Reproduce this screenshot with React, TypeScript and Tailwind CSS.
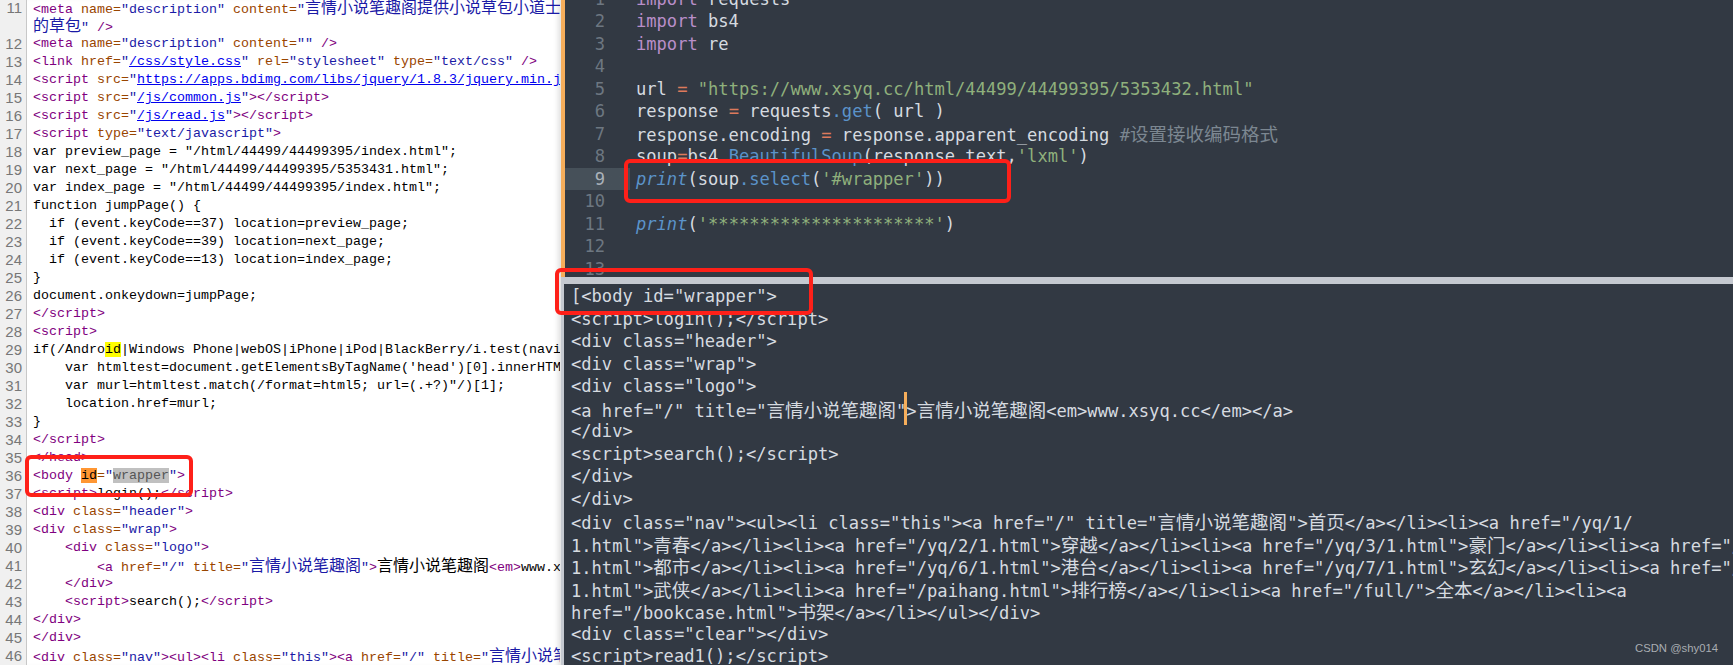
import type { ReactNode } from 'react'

const tag = 'text-[#800080]'
const attr = 'text-[#994500]'
const val = 'text-[#1a1aa6]'
const link = 'text-[#0000ee] underline'

const kw = 'text-[#b98ec9]'
const str = 'text-[#8fb07c]'
const fn = 'text-[#5b93c9]'
const op = 'text-[#dd7a5c]'
const cmt = 'text-[#7c8791]'
const em = 'text-[#5b93c9] italic'

type Tok = string | [string, string]

// wider CJK glyphs so they sit on the same grid as the source screenshot
function Cjk({ text, size }: { text: string; size: string }) {
  const parts = text.split(/([\u4e00-\u9fff]+)/)
  return (
    <>
      {parts.map((p, i) =>
        i % 2 === 1 ? (
          <span key={i} className={size}>
            {p}
          </span>
        ) : (
          p
        ),
      )}
    </>
  )
}

function Toks({ toks, size }: { toks: Tok[]; size: string }) {
  return (
    <>
      {toks.map((t, i) =>
        typeof t === 'string' ? (
          <Cjk key={i} text={t} size={size} />
        ) : (
          <span key={i} className={t[0]}>
            <Cjk text={t[1]} size={size} />
          </span>
        ),
      )}
    </>
  )
}

const cjkLeft = "text-[16px] [font-family:'Noto_Sans_CJK_SC',sans-serif]"
const cjkRight = "text-[18.5px] [font-family:'Noto_Sans_CJK_SC',sans-serif]"

// shorthand for a coloured html tag with attrs
const open = (name: string, a: string, v: string, close = '>'): Tok[] => [
  [tag, `<${name} `],
  [attr, `${a}=`],
  [val, `"${v}"`],
  [tag, close],
]

const sourceRows: { n?: number; toks: Tok[] }[] = [
  {
    n: 11,
    toks: [
      [tag, '<meta '],
      [attr, 'name='],
      [val, '"description" '],
      [attr, 'content='],
      [val, '"言情小说笔趣阁提供小说草包小道士最新章节'],
    ],
  },
  { toks: [[val, '的草包" '], [tag, '/>']] },
  { n: 12, toks: [[tag, '<meta '], [attr, 'name='], [val, '"description" '], [attr, 'content='], [val, '"" '], [tag, '/>']] },
  {
    n: 13,
    toks: [
      [tag, '<link '],
      [attr, 'href='],
      [val, '"'],
      [link, '/css/style.css'],
      [val, '" '],
      [attr, 'rel='],
      [val, '"stylesheet" '],
      [attr, 'type='],
      [val, '"text/css" '],
      [tag, '/>'],
    ],
  },
  {
    n: 14,
    toks: [[tag, '<script '], [attr, 'src='], [val, '"'], [link, 'https://apps.bdimg.com/libs/jquery/1.8.3/jquery.min.js']],
  },
  { n: 15, toks: [[tag, '<script '], [attr, 'src='], [val, '"'], [link, '/js/common.js'], [val, '"'], [tag, '></script>']] },
  { n: 16, toks: [[tag, '<script '], [attr, 'src='], [val, '"'], [link, '/js/read.js'], [val, '"'], [tag, '></script>']] },
  { n: 17, toks: open('script', 'type', 'text/javascript') },
  { n: 18, toks: ['var preview_page = "/html/44499/44499395/index.html";'] },
  { n: 19, toks: ['var next_page = "/html/44499/44499395/5353431.html";'] },
  { n: 20, toks: ['var index_page = "/html/44499/44499395/index.html";'] },
  { n: 21, toks: ['function jumpPage() {'] },
  { n: 22, toks: ['  if (event.keyCode==37) location=preview_page;'] },
  { n: 23, toks: ['  if (event.keyCode==39) location=next_page;'] },
  { n: 24, toks: ['  if (event.keyCode==13) location=index_page;'] },
  { n: 25, toks: ['}'] },
  { n: 26, toks: ['document.onkeydown=jumpPage;'] },
  { n: 27, toks: [[tag, '</script>']] },
  { n: 28, toks: [[tag, '<script>']] },
  {
    n: 29,
    toks: [
      'if(/Andro',
      ['bg-[#ffff00]', 'id'],
      '|Windows Phone|webOS|iPhone|iPod|BlackBerry/i.test(navigator.userAgent)) {',
    ],
  },
  { n: 30, toks: ["    var htmltest=document.getElementsByTagName('head')[0].innerHTML;"] },
  { n: 31, toks: ['    var murl=htmltest.match(/format=html5; url=(.+?)"/)[1];'] },
  { n: 32, toks: ['    location.href=murl;'] },
  { n: 33, toks: ['}'] },
  { n: 34, toks: [[tag, '</script>']] },
  { n: 35, toks: [[tag, '</head>']] },
  {
    n: 36,
    toks: [
      [tag, '<body '],
      [`${attr} bg-[#ff9632] !text-black`, 'id'],
      [attr, '='],
      [val, '"'],
      [`${val} bg-[#c0c0c0] !text-[#555]`, 'wrapper'],
      [val, '"'],
      [tag, '>'],
    ],
  },
  { n: 37, toks: [[tag, '<script>'], 'login();', [tag, '</script>']] },
  { n: 38, toks: open('div', 'class', 'header') },
  { n: 39, toks: open('div', 'class', 'wrap') },
  { n: 40, toks: ['    ', ...open('div', 'class', 'logo')] },
  {
    n: 41,
    toks: [
      '        ',
      [tag, '<a '],
      [attr, 'href='],
      [val, '"/" '],
      [attr, 'title='],
      [val, '"言情小说笔趣阁"'],
      [tag, '>'],
      '言情小说笔趣阁',
      [tag, '<em>'],
      'www.xsyq.cc',
      [tag, '</em></a>'],
    ],
  },
  { n: 42, toks: ['    ', [tag, '</div>']] },
  { n: 43, toks: ['    ', [tag, '<script>'], 'search();', [tag, '</script>']] },
  { n: 44, toks: [[tag, '</div>']] },
  { n: 45, toks: [[tag, '</div>']] },
  {
    n: 46,
    toks: [
      ...open('div', 'class', 'nav'),
      [tag, '<ul>'],
      ...open('li', 'class', 'this'),
      [tag, '<a '],
      [attr, 'href='],
      [val, '"/" '],
      [attr, 'title='],
      [val, '"言情小说笔趣阁"'],
    ],
  },
]

const codeRows: Tok[][] = [
  [[kw, 'import'], ' requests'],
  [[kw, 'import'], ' bs4'],
  [[kw, 'import'], ' re'],
  [],
  ['url ', [op, '='], ' ', [str, '"https://www.xsyq.cc/html/44499/44499395/5353432.html"']],
  ['response ', [op, '='], ' requests', [fn, '.get'], '( url )'],
  ['response.encoding ', [op, '='], ' response.apparent_encoding ', [cmt, '#设置接收编码格式']],
  ['soup', [op, '='], 'bs4', [fn, '.BeautifulSoup'], '(response.text,', [str, "'lxml'"], ')'],
  [[em, 'print'], '(soup', [fn, '.select'], '(', [str, "'#wrapper'"], '))'],
  [],
  [[em, 'print'], '(', [str, "'**********************'"], ')'],
  [],
  [],
]

const outputRows: ReactNode[] = [
  '[<body id="wrapper">',
  '<script>login();</script>',
  '<div class="header">',
  '<div class="wrap">',
  '<div class="logo">',
  <>
    <Cjk text={'<a href="/" title="言情小说笔趣阁"'} size={cjkRight} />
    <span className="relative">
      <span className="absolute left-[-2px] top-[-9px] h-[33px] w-[3px] bg-[#f6ae5b]" />
      {'>'}
    </span>
    <Cjk text="言情小说笔趣阁<em>www.xsyq.cc</em></a>" size={cjkRight} />
  </>,
  '</div>',
  '<script>search();</script>',
  '</div>',
  '</div>',
  <Cjk
    text={'<div class="nav"><ul><li class="this"><a href="/" title="言情小说笔趣阁">首页</a></li><li><a href="/yq/1/'}
    size={cjkRight}
  />,
  <Cjk
    text={'1.html">青春</a></li><li><a href="/yq/2/1.html">穿越</a></li><li><a href="/yq/3/1.html">豪门</a></li><li><a href="/yq/4/'}
    size={cjkRight}
  />,
  <Cjk
    text={'1.html">都市</a></li><li><a href="/yq/6/1.html">港台</a></li><li><a href="/yq/7/1.html">玄幻</a></li><li><a href="/yq/8/'}
    size={cjkRight}
  />,
  <Cjk
    text={'1.html">武侠</a></li><li><a href="/paihang.html">排行榜</a></li><li><a href="/full/">全本</a></li><li><a'}
    size={cjkRight}
  />,
  <Cjk text={'href="/bookcase.html">书架</a></li></ul></div>'} size={cjkRight} />,
  '<div class="clear"></div>',
  '<script>read1();</script>',
]

export default function App() {
  return (
    <div className="relative flex h-[665px] w-[1733px] overflow-hidden bg-white">
      {/* ── page source ─────────────────────────── */}
      <div className="h-full w-[561px] shrink-0 overflow-hidden shadow-[inset_-6px_0_5px_-3px_rgba(0,0,0,0.12)]">
        <div className="relative flex h-full flex-col">
          <div className="absolute inset-y-0 left-0 w-[27px] border-r border-[#c8c8c8] bg-[#f0f0f0]" />
          <div className="relative -mt-[1px] flex flex-col">
            {sourceRows.map((row, i) => (
              <div key={i} className="flex h-[18px] items-center leading-[18px]">
                <span className="w-[22px] shrink-0 text-right font-['Liberation_Sans',sans-serif] text-[15px] text-[#777]">
                  {row.n}
                </span>
                <pre className="ml-[11px] w-[527px] overflow-hidden font-['Liberation_Mono',monospace] text-[13.33px] whitespace-pre text-black">
                  <Toks toks={row.toks} size={cjkLeft} />
                </pre>
              </div>
            ))}
          </div>
        </div>
      </div>

      {/* ── editor + output ─────────────────────── */}
      <div className="flex min-w-0 flex-1 flex-col font-['DejaVu_Sans_Mono',monospace] text-[17.1px] text-[#d6dbe0]">
        <div className="flex h-[277px] shrink-0 overflow-hidden bg-[#323943]">
          <div className="w-[4px] shrink-0 bg-[#f6ae5b]" />
          <div className="-mt-[12.5px] flex-1">
            {codeRows.map((toks, i) => (
              <div
                key={i}
                className={`flex h-[22.5px] items-center leading-[22.5px] ${i === 8 ? 'bg-gradient-to-r from-[#465059] from-[65px] to-transparent to-[65px]' : ''}`}
              >
                <span className={`w-[40px] shrink-0 text-right ${i === 8 ? 'text-[#aab2ba]' : 'text-[#6d7781]'}`}>{i + 1}</span>
                <pre className="ml-[31px] font-[inherit] whitespace-pre">
                  <Toks toks={toks} size={cjkRight} />
                </pre>
              </div>
            ))}
          </div>
        </div>
        <div className="h-[7px] shrink-0 bg-[#c5c9d0]" />
        <div className="flex min-h-0 flex-1">
          <div className="w-[3px] shrink-0 bg-[#c5c9d0]" />
          <div className="min-w-0 flex-1 overflow-hidden bg-[#323943] pt-[1px] pl-[7px]">
            {outputRows.map((row, i) => (
              <pre key={i} className="h-[22.5px] font-[inherit] leading-[22.5px] whitespace-pre">
                {row}
              </pre>
            ))}
          </div>
        </div>
      </div>

      {/* ── annotations ─────────────────────────── */}
      <div className="absolute top-[455px] left-[25px] h-[42px] w-[168px] rounded-[6px] border-4 border-[#fe2019]" />
      <div className="absolute top-[159px] left-[624px] h-[44px] w-[387px] rounded-[6px] border-4 border-[#fe2019]" />
      <div className="absolute top-[268px] left-[555px] h-[47px] w-[258px] rounded-[6px] border-4 border-[#fe2019]" />
      <span className="absolute top-[640px] left-[1635px] font-['Liberation_Sans',sans-serif] text-[11.3px] leading-[16px] text-[#a9adb2]">
        CSDN @shy014
      </span>
    </div>
  )
}
